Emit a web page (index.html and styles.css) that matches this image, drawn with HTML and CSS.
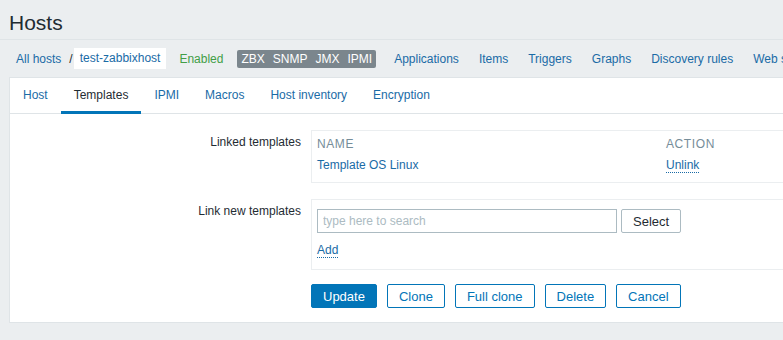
FILE: index.html
```html
<!doctype html>
<html lang="en">
 <head>
  <meta charset="UTF-8">
  <title>Hosts - Templates</title>
  <meta name="viewport" content="width=device-width, initial-scale=1.0">
  <link rel="stylesheet" href="styles.css">
 </head>
 <body>
  <header class="page-header">
   <h1>Hosts</h1>
  </header>
  <nav class="host-nav">
   <a class="crumb" href="#">All hosts</a>
   <span class="crumb-sep">/</span>
   <span class="crumb-current">test-zabbixhost</span>
   <span class="state-enabled">Enabled</span>
   <span class="status-group">
    <span class="status-item">ZBX</span><span class="status-item">SNMP</span><span class="status-item">JMX</span><span class="status-item">IPMI</span>
   </span>
   <ul class="host-links">
    <li><a href="#">Applications</a></li>
    <li><a href="#">Items</a></li>
    <li><a href="#">Triggers</a></li>
    <li><a href="#">Graphs</a></li>
    <li><a href="#">Discovery rules</a></li>
    <li><a href="#">Web scenarios</a></li>
   </ul>
  </nav>
  <main class="form-container">
   <ul class="tabs">
    <li><a href="#">Host</a></li>
    <li class="active"><a href="#">Templates</a></li>
    <li><a href="#">IPMI</a></li>
    <li><a href="#">Macros</a></li>
    <li><a href="#">Host inventory</a></li>
    <li><a href="#">Encryption</a></li>
   </ul>
   <form class="form-grid">
    <label class="form-label">Linked templates</label>
    <div class="field-box linked">
     <table class="linked-table">
      <thead>
       <tr><th class="col-name">Name</th><th>Action</th></tr>
      </thead>
      <tbody>
       <tr><td class="col-name"><a href="#">Template OS Linux</a></td><td><a class="dotted" href="#">Unlink</a></td></tr>
      </tbody>
     </table>
    </div>

    <label class="form-label" for="tplSearch">Link new templates</label>
    <div class="field-box new-templates">
     <div class="search-row">
      <input type="text" id="tplSearch" placeholder="type here to search">
      <button type="button" class="btn-grey">Select</button>
     </div>
     <a class="dotted add-link" href="#">Add</a>
    </div>

    <div></div>
    <div class="form-buttons">
     <button type="submit" class="btn-main">Update</button>
     <button type="button" class="btn-alt">Clone</button>
     <button type="button" class="btn-alt">Full clone</button>
     <button type="button" class="btn-alt">Delete</button>
     <button type="button" class="btn-alt">Cancel</button>
    </div>
   </form>
  </main>
 </body>
</html>
```

FILE: styles.css
```css
:root {
  --bg: #ebeef0;
  --line: #dfe4e7;
  --text: #1f2c33;
  --muted: #768d99;
  --link: #1a6ba6;
  --accent: #0275b8;
  --green: #429e47;
}

body {
  margin: 0;
  background-color: var(--bg);
  color: var(--text);
  font-family: "Liberation Sans", Arial, sans-serif;
  font-size: 12px;
  overflow: hidden;
  white-space: nowrap;
}

a {
  color: var(--link);
  text-decoration: none;
}

ul {
  list-style: none;
  margin: 0;
  padding: 0;
}

/* page title */
.page-header {
  padding: 11px 9px 4px;
  border-bottom: 1px solid var(--line);
}

.page-header h1 {
  margin: 0;
  font-size: 21px;
  font-weight: normal;
  line-height: 24px;
}

/* breadcrumbs + host links */
.host-nav {
  display: flex;
  align-items: center;
  height: 37px;
  padding-left: 16px;
}

.crumb-sep {
  margin: 0 1px 0 8px;
  color: var(--text);
}

.crumb-current {
  background-color: #fff;
  padding: 0 6px;
  line-height: 21px;
  color: var(--link);
}

.state-enabled {
  color: var(--green);
  margin-left: 13px;
}

.status-group {
  display: flex;
  margin-left: 14px;
}

.status-item {
  background-color: #7b868d;
  color: #fff;
  padding: 2px 4px;
  line-height: 14px;
}

.status-item:first-child {
  border-radius: 2px 0 0 2px;
}

.status-item:last-child {
  border-radius: 0 2px 2px 0;
}

.host-links {
  display: flex;
  gap: 20px;
  margin-left: 18px;
}

/* white form container */
.form-container {
  background-color: #fff;
  border: 1px solid var(--line);
  border-right: none;
  margin: 0 -200px 0 9px;
}

.tabs {
  display: flex;
  border-bottom: 1px solid var(--line);
  height: 35px;
}

.tabs li a {
  display: block;
  padding: 2px 13px 0;
  line-height: 31px;
  border-bottom: 3px solid transparent;
}

.tabs li.active a {
  color: var(--text);
  border-bottom-color: var(--accent);
}

.form-grid {
  display: grid;
  grid-template-columns: 291px 1fr;
  column-gap: 10px;
  row-gap: 16px;
  padding: 16px 0 14px;
}

.form-label {
  text-align: right;
  padding-top: 5px;
  line-height: 15px;
}

.field-box {
  border: 1px solid var(--bg);
  padding: 5px;
}

.linked-table {
  border-collapse: collapse;
}

.linked-table th {
  text-align: left;
  font-weight: normal;
  color: var(--muted);
  text-transform: uppercase;
  letter-spacing: 0.6px;
  line-height: 16px;
  padding: 0;
}

.linked-table td {
  padding: 5px 0 4px;
  line-height: 16px;
}

.col-name {
  width: 349px;
}

.dotted {
  border-bottom: 1px dotted var(--link);
}

.new-templates {
  padding-top: 9px;
}

.search-row {
  display: flex;
  gap: 4px;
}

.search-row input {
  box-sizing: border-box;
  width: 300px;
  height: 24px;
  border: 1px solid #acbbc2;
  padding: 0 5px;
  font-family: inherit;
  font-size: 12px;
  color: var(--text);
}

.search-row input::placeholder {
  color: #acbbc2;
}

button {
  box-sizing: border-box;
  height: 24px;
  padding: 0 11px;
  border-radius: 2px;
  font-family: "Liberation Sans", Arial, sans-serif;
  font-size: 13px;
  cursor: pointer;
}

.btn-grey {
  background-color: #fff;
  border: 1px solid #acbbc2;
  color: var(--text);
}

.add-link {
  display: inline-block;
  margin-top: 10px;
  line-height: 14px;
  margin-bottom: 6px;
}

.form-buttons {
  display: flex;
  gap: 10px;
  margin-top: -2px;
}

.btn-main {
  background-color: var(--accent);
  border: 1px solid var(--accent);
  color: #fff;
}

.btn-alt {
  background-color: #fff;
  border: 1px solid var(--accent);
  color: var(--accent);
}
```
